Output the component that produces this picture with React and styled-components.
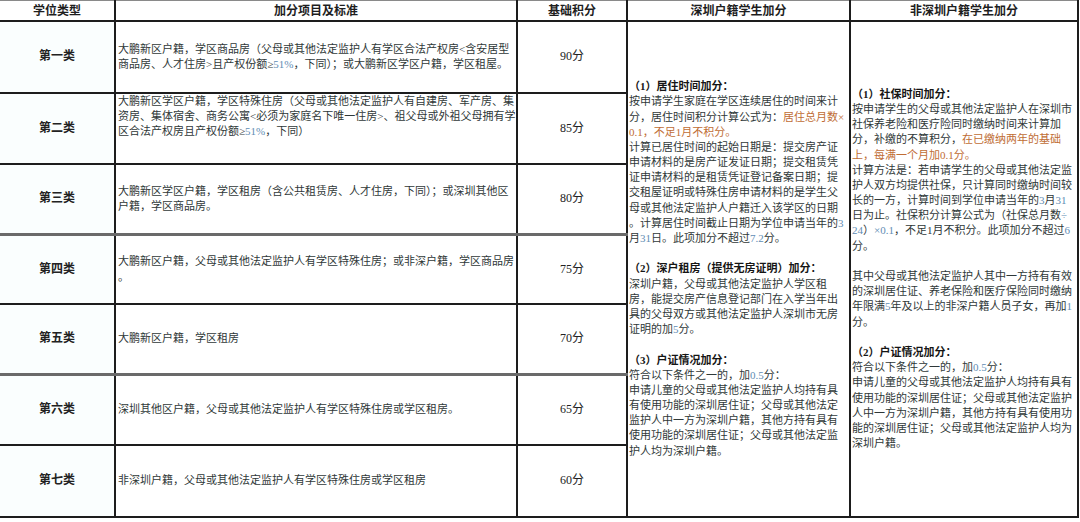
import React from 'react'
import styled, { createGlobalStyle } from 'styled-components'

const GlobalStyle = createGlobalStyle`
  body {
    margin: 0;
    background: #fff;
  }
`

const Sheet = styled.table`
  width: 1078px;
  table-layout: fixed;
  border-collapse: collapse;
  font-family: "Liberation Serif", "Noto Sans CJK SC", serif;
  font-size: 11px;
  color: #2f3838;
  border-top: 1px solid #8a8a8a;
  border-right: 2px solid #1d1d1d;
`

const Col = styled.col`
  width: ${p => p.$w}px;
`

const Head = styled.th`
  height: 19px;
  padding: 0;
  font-size: 12px;
  font-weight: 700;
  color: #1e1e1e;
  text-align: center;
  line-height: 1;
  border-bottom: 2px solid #1d1d1d;
  border-left: 2px solid #1d1d1d;

  &:first-child {
    border-left: none;
  }
`

const Cell = styled.td`
  height: ${p => p.$h}px;
  padding: 0;
  vertical-align: ${p => (p.$top ? 'top' : 'middle')};
  border-left: 2px solid #1d1d1d;
  border-bottom: ${p => (p.$gray ? '3px solid #6a6a6a' : '2px solid #1d1d1d')};
  line-height: 15.2px;
`

const Kind = styled(Cell)`
  border-left: none;
  background: #fafefe;
  text-align: center;
  font-size: 12px;
  font-weight: 700;
  color: #222;
`

const Rule = styled(Cell)`
  padding-left: 2px;
  white-space: nowrap;
`

const Score = styled(Cell)`
  text-align: center;
  font-size: 12px;
  color: #222;
`

const Notes = styled.td`
  padding: 0 0 0 ${p => p.$pad}px;
  vertical-align: middle;
  border-left: 2px solid #1d1d1d;
  border-bottom: 2px solid #1d1d1d;
  line-height: 15.2px;
  white-space: nowrap;
`

const Line = styled.div`
  height: 15.2px;
  font-weight: ${p => (p.$bold ? 700 : 400)};
  color: ${p => (p.$bold ? '#151515' : 'inherit')};
`

const Gap = styled.div`
  height: 15.2px;
`

const Num = styled.span`
  color: #5f8db4;
`

const Warm = styled.span`
  color: #c06d35;
`

const rows = [
  {
    kind: '第一类',
    h: 70,
    score: '90分',
    rule: (
      <>
        大鹏新区户籍，学区商品房（父母或其他法定监护人有学区合法产权房&lt;含安居型<br />
        商品房、人才住房&gt;且产权份额≥<Num>51%</Num>，下同）；或大鹏新区学区户籍，学区租屋。
      </>
    )
  },
  {
    kind: '第二类',
    h: 69,
    top: true,
    score: '85分',
    rule: (
      <>
        大鹏新区学区户籍，学区特殊住房（父母或其他法定监护人有自建房、军产房、集<br />
        资房、集体宿舍、商务公寓&lt;必须为家庭名下唯一住房&gt;、祖父母或外祖父母拥有学<br />
        区合法产权房且产权份额≥<Num>51%</Num>，下同）
      </>
    )
  },
  {
    kind: '第三类',
    h: 68,
    gray: true,
    score: '80分',
    rule: (
      <>
        大鹏新区学区户籍，学区租房（含公共租赁房、人才住房，下同）；或深圳其他区<br />
        户籍，学区商品房。
      </>
    )
  },
  {
    kind: '第四类',
    h: 67,
    score: '75分',
    rule: (
      <>
        大鹏新区户籍，父母或其他法定监护人有学区特殊住房；或非深户籍，学区商品房<br />
        。
      </>
    )
  },
  { kind: '第五类', h: 68, gray: true, score: '70分', rule: '大鹏新区户籍，学区租房' },
  {
    kind: '第六类',
    h: 68,
    score: '65分',
    rule: '深圳其他区户籍，父母或其他法定监护人有学区特殊住房或学区租房。'
  },
  {
    kind: '第七类',
    h: 70,
    score: '60分',
    rule: '非深圳户籍，父母或其他法定监护人有学区特殊住房或学区租房'
  }
]

const LocalNotes = () => (
  <Notes rowSpan={7} $pad={1}>
    <Line $bold>（1）居住时间加分：</Line>
    <Line>按申请学生家庭在学区连续居住的时间来计</Line>
    <Line>分，居住时间积分计算公式为：<Warm>居住总月数×</Warm></Line>
    <Line><Warm>0.1，不足1月不积分。</Warm></Line>
    <Line>计算已居住时间的起始日期是：提交房产证</Line>
    <Line>申请材料的是房产证发证日期；提交租赁凭</Line>
    <Line>证申请材料的是租赁凭证登记备案日期；提</Line>
    <Line>交租屋证明或特殊住房申请材料的是学生父</Line>
    <Line>母或其他法定监护人户籍迁入该学区的日期</Line>
    <Line>。计算居住时间截止日期为学位申请当年的<Num>3</Num></Line>
    <Line>月<Num>31</Num>日。此项加分不超过<Num>7.2</Num>分。</Line>
    <Gap />
    <Line $bold>（2）深户租房（提供无房证明）加分：</Line>
    <Line>深圳户籍，父母或其他法定监护人学区租</Line>
    <Line>房，能提交房产信息登记部门在入学当年出</Line>
    <Line>具的父母双方或其他法定监护人深圳市无房</Line>
    <Line>证明的加<Num>5</Num>分。</Line>
    <Gap />
    <Line $bold>（3）户证情况加分：</Line>
    <Line>符合以下条件之一的，加<Num>0.5</Num>分：</Line>
    <Line>申请儿童的父母或其他法定监护人均持有具</Line>
    <Line>有使用功能的深圳居住证；父母或其他法定</Line>
    <Line>监护人中一方为深圳户籍，其他方持有具有</Line>
    <Line>使用功能的深圳居住证；父母或其他法定监</Line>
    <Line>护人均为深圳户籍。</Line>
  </Notes>
)

const OtherNotes = () => (
  <Notes rowSpan={7} $pad={1}>
    <Line $bold>（1）社保时间加分：</Line>
    <Line>按申请学生的父母或其他法定监护人在深圳市</Line>
    <Line>社保养老险和医疗险同时缴纳时间来计算加</Line>
    <Line>分，补缴的不算积分，<Warm>在已缴纳两年的基础</Warm></Line>
    <Line><Warm>上，每满一个月加0.1分。</Warm></Line>
    <Line>计算方法是：若申请学生的父母或其他法定监</Line>
    <Line>护人双方均提供社保，只计算同时缴纳时间较</Line>
    <Line>长的一方，计算时间到学位申请当年的<Num>3</Num>月<Num>31</Num></Line>
    <Line>日为止。社保积分计算公式为（社保总月数<Num>÷</Num></Line>
    <Line><Num>24</Num>）<Num>×0.1</Num>，不足1月不积分。此项加分不超过<Num>6</Num></Line>
    <Line>分。</Line>
    <Gap />
    <Line>其中父母或其他法定监护人其中一方持有有效</Line>
    <Line>的深圳居住证、养老保险和医疗保险同时缴纳</Line>
    <Line>年限满<Num>5</Num>年及以上的非深户籍人员子女，再加<Num>1</Num></Line>
    <Line>分。</Line>
    <Gap />
    <Line $bold>（2）户证情况加分：</Line>
    <Line>符合以下条件之一的，加<Num>0.5</Num>分：</Line>
    <Line>申请儿童的父母或其他法定监护人均持有具有</Line>
    <Line>使用功能的深圳居住证；父母或其他法定监护</Line>
    <Line>人中一方为深圳户籍，其他方持有具有使用功</Line>
    <Line>能的深圳居住证；父母或其他法定监护人均为</Line>
    <Line>深圳户籍。</Line>
  </Notes>
)

const App = () => (
  <>
    <GlobalStyle />
    <Sheet>
      <colgroup>
        <Col $w={115} />
        <Col $w={402} />
        <Col $w={110} />
        <Col $w={223} />
        <Col $w={228} />
      </colgroup>
      <thead>
        <tr>
          <Head>学位类型</Head>
          <Head>加分项目及标准</Head>
          <Head>基础积分</Head>
          <Head>深圳户籍学生加分</Head>
          <Head>非深圳户籍学生加分</Head>
        </tr>
      </thead>
      <tbody>
        {rows.map((row, i) => (
          <tr key={row.kind}>
            <Kind $h={row.h} $gray={row.gray}>{row.kind}</Kind>
            <Rule $h={row.h} $gray={row.gray} $top={row.top}>{row.rule}</Rule>
            <Score $h={row.h} $gray={row.gray}>{row.score}</Score>
            {i === 0 && <LocalNotes />}
            {i === 0 && <OtherNotes />}
          </tr>
        ))}
      </tbody>
    </Sheet>
  </>
)

export default App
